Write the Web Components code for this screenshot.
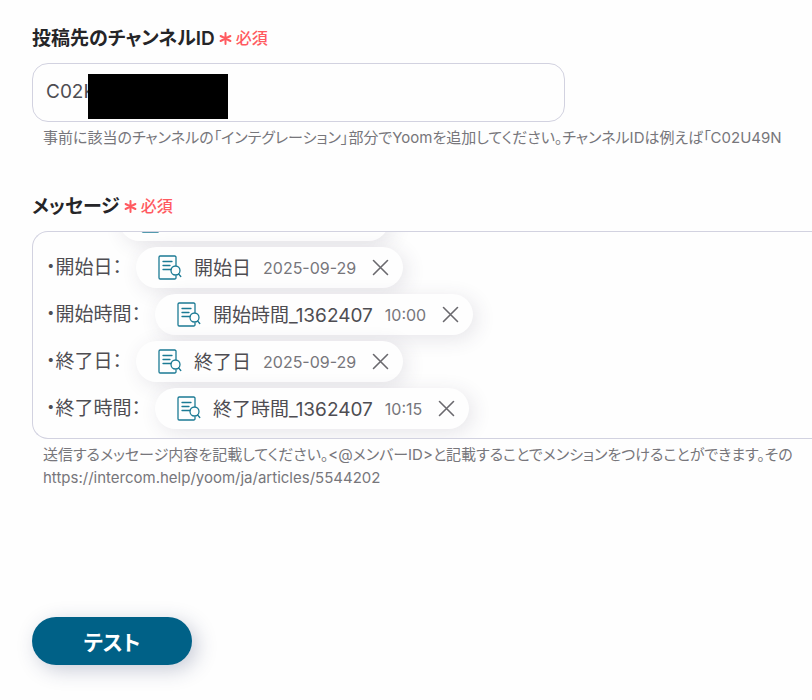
<!DOCTYPE html>
<html lang="ja">
<head>
<meta charset="utf-8">
<meta name="viewport" content="width=device-width, initial-scale=1">
<title>Yoom</title>
<style>
  body {
    margin: 0;
    overflow-x: hidden;
    background: #fefefe;
    color: #4e4d52;
    font-family: Inter, "Noto Sans CJK JP", sans-serif;
    font-feature-settings: "palt";
    font-size: 19px;
  }
</style>
</head>
<body>
<action-form>
  <form-field>
    <field-label slot="label">投稿先のチャンネルID</field-label>
    <masked-input label="投稿先のチャンネルID" value="C02K"></masked-input>
    <span slot="help">事前に該当のチャンネルの「インテグレーション」部分でYoomを追加してください。チャンネルIDは例えば「C02U49N</span>
  </form-field>
  <form-field>
    <field-label slot="label">メッセージ</field-label>
    <message-editor label="メッセージ">
      <message-line class="first"><value-chip slot="chip" class="wide"></value-chip></message-line>
      <message-line>・開始日：<value-chip slot="chip" value="2025-09-29">開始日</value-chip></message-line>
      <message-line>・開始時間：<value-chip slot="chip" value="10:00">開始時間_1362407</value-chip></message-line>
      <message-line>・終了日：<value-chip slot="chip" value="2025-09-29">終了日</value-chip></message-line>
      <message-line>・終了時間：<value-chip slot="chip" value="10:15">終了時間_1362407</value-chip></message-line>
    </message-editor>
    <span slot="help">送信するメッセージ内容を記載してください。&lt;@メンバーID&gt;と記載することでメンションをつけることができます。その<br>https://intercom.help/yoom/ja/articles/5544202</span>
  </form-field>
  <pill-button slot="actions">テスト</pill-button>
</action-form>

<script>
class ActionForm extends HTMLElement {
  constructor() {
    super();

    this.attachShadow({mode: "open"});
    this.shadowRoot.innerHTML = `
      <style>
        :host {
          display: block;
          padding: 22px 0 32px 32px;
        }

        .fields {
          display: grid;
          grid-template-columns: minmax(0, 1fr);
          gap: 41px;
        }

        footer {
          margin-top: 128px;
        }
      </style>
      <div class="fields"><slot></slot></div>
      <footer><slot name="actions"></slot></footer>
    `;
  }
}

class FormField extends HTMLElement {
  constructor() {
    super();

    this.attachShadow({mode: "open"});
    this.shadowRoot.innerHTML = `
      <style>
        :host {
          display: block;
        }

        .help {
          margin: 4px 0 0 11px;
          color: #77767b;
          font-size: 15px;
          line-height: 23px;
          white-space: nowrap;
        }
      </style>
      <slot name="label"></slot>
      <slot></slot>
      <div class="help"><slot name="help"></slot></div>
    `;
  }
}

class FieldLabel extends HTMLElement {
  constructor() {
    super();

    this.attachShadow({mode: "open"});
    this.shadowRoot.innerHTML = `
      <style>
        :host {
          display: flex;
          align-items: center;
          gap: 4px;
          height: 28px;
          margin-bottom: 13px;
          color: #252528;
          font-weight: 600;
        }

        .required {
          display: flex;
          align-items: center;
          gap: 4px;
          padding-top: 2px;
          color: #ff5a60;
          font-size: 16px;
          font-weight: 500;
        }

        svg {
          margin-top: 2px;
        }
      </style>
      <span><slot></slot></span>
      <span class="required">
        <svg width="13" height="13" viewBox="0 0 13 13" fill="none" stroke="currentColor" stroke-width="2" stroke-linecap="round" aria-hidden="true">
          <path d="M6.5 1v11M1.600 4l9.800 5M1.600 9l9.800-5"/>
        </svg>
        必須
      </span>
    `;

    this.addEventListener("click", () => {
      this.parentElement.querySelector("masked-input, message-editor")?.focus();
    });
  }
}

class MaskedInput extends HTMLElement {
  #input = undefined;

  constructor() {
    super();

    this.attachShadow({mode: "open", delegatesFocus: true});
    this.shadowRoot.innerHTML = `
      <style>
        :host {
          display: block;
          position: relative;
          max-width: 533px;
        }

        input {
          box-sizing: border-box;
          display: block;
          width: 100%;
          height: 59px;
          padding: 0 13px 3px;
          border: 1px solid #d2d2e0;
          border-radius: 16px;
          outline: none;
          background: #fefefe;
          color: #4e4d52;
          font: inherit;
        }

        .mask {
          position: absolute;
          top: 11px;
          left: 56px;
          width: 140px;
          height: 45px;
          background: #000;
        }
      </style>
      <input type="text">
      <span class="mask"></span>
    `;

    this.#input = this.shadowRoot.querySelector("input");
  }

  connectedCallback() {
    this.#input.value = this.getAttribute("value") ?? "";
    this.#input.setAttribute("aria-label", this.getAttribute("label"));
  }
}

class MessageEditor extends HTMLElement {
  constructor() {
    super();

    this.attachShadow({mode: "open", delegatesFocus: true});
    this.shadowRoot.innerHTML = `
      <style>
        :host {
          display: block;
        }

        .box {
          box-sizing: border-box;
          display: flex;
          flex-direction: column;
          justify-content: flex-end;
          height: 208px;
          padding: 0 13px 6px;
          overflow: hidden;
          border: 1px solid #d2d2e0;
          border-right: 0;
          border-radius: 16px 0 0 16px;
          outline: none;
        }
      </style>
      <div class="box" role="textbox" aria-multiline="true" tabindex="0"><slot></slot></div>
    `;
  }

  connectedCallback() {
    this.shadowRoot.querySelector(".box").setAttribute("aria-label", this.getAttribute("label"));
  }
}

class MessageLine extends HTMLElement {
  constructor() {
    super();

    this.attachShadow({mode: "open"});
    this.shadowRoot.innerHTML = `
      <style>
        :host {
          display: flex;
          flex: none;
          align-items: center;
          gap: 14px;
          height: 47px;
        }

        :host(.first) {
          padding-left: 59px;
        }

        .text {
          padding-bottom: 4px;
        }
      </style>
      <span class="text"><slot></slot></span>
      <slot name="chip"></slot>
    `;
  }
}

class ValueChip extends HTMLElement {
  constructor() {
    super();

    this.attachShadow({mode: "open"});
    this.shadowRoot.innerHTML = `
      <style>
        :host {
          box-sizing: border-box;
          display: inline-flex;
          align-items: center;
          gap: 12px;
          height: 41px;
          padding: 0 14px 0 22px;
          border-radius: 21px;
          background: #fefefe;
          box-shadow: 4px 4px 20px rgba(60, 50, 80, 0.12);
        }

        :host(.wide) {
          width: 270px;
        }

        .name {
          padding-bottom: 2px;
        }

        .value {
          color: #77767b;
          font-size: 16px;
        }

        button {
          display: flex;
          margin-left: 4px;
          padding: 0;
          border: 0;
          background: none;
          color: #6a696e;
          cursor: pointer;
        }
      </style>
      <svg width="24" height="25" viewBox="0 0 24 25" fill="none" stroke="#1b7a94" stroke-width="1.3" stroke-linecap="round" aria-hidden="true">
        <path d="M18 10.500V2.200A1.200 1.200 0 0 0 16.800 1H2.200A1.200 1.200 0 0 0 1 2.200v20.600A1.200 1.200 0 0 0 2.200 24h14.600a1.200 1.200 0 0 0 1.200-1.200V21"/>
        <path d="M5 6.500h9M5 10.500h7M5 14.500h8"/>
        <circle cx="17.500" cy="15.500" r="4.500"/>
        <path d="M20.600 19l2.200 2.500"/>
      </svg>
      <span class="name"><slot></slot></span>
      <span class="value"></span>
      <button type="button" aria-label="削除">
        <svg width="17" height="17" viewBox="0 0 17 17" fill="none" stroke="currentColor" stroke-width="1.6" stroke-linecap="round">
          <path d="M1.500 1.500l14 14M15.500 1.500l-14 14"/>
        </svg>
      </button>
    `;

    this.shadowRoot.querySelector("button").addEventListener("click", () => { this.remove(); });
  }

  connectedCallback() {
    this.shadowRoot.querySelector(".value").textContent = this.getAttribute("value") ?? "";
  }
}

class PillButton extends HTMLElement {
  constructor() {
    super();

    this.attachShadow({mode: "open"});
    this.shadowRoot.innerHTML = `
      <style>
        :host {
          display: inline-block;
        }

        button {
          min-width: 160px;
          height: 48px;
          padding: 0 24px;
          border: 0;
          border-radius: 24px;
          background: #006187;
          box-shadow: 5px 5px 20px rgba(40, 50, 100, 0.25);
          color: #fff;
          font: inherit;
          font-feature-settings: inherit;
          font-size: 21px;
          font-weight: 700;
          cursor: pointer;
        }
      </style>
      <button type="button"><slot></slot></button>
    `;
  }
}

customElements.define("action-form", ActionForm);
customElements.define("form-field", FormField);
customElements.define("field-label", FieldLabel);
customElements.define("masked-input", MaskedInput);
customElements.define("message-editor", MessageEditor);
customElements.define("message-line", MessageLine);
customElements.define("value-chip", ValueChip);
customElements.define("pill-button", PillButton);
</script>
</body>
</html>
